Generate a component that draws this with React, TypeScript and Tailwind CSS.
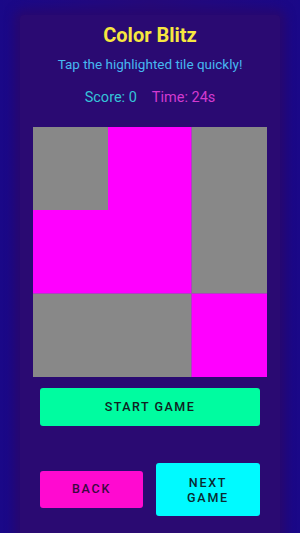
import React from "react";

export default function App() {
  const font = { fontFamily: "Roboto, 'Noto Sans', sans-serif" };
  return (
    <div
      className="w-[300px] h-[533px] overflow-hidden bg-gradient-to-r from-[#1a0888] via-[#25097a] to-[#1a0888] flex justify-center pt-[15px]"
      style={font}
    >
      <div className="w-[260px] h-[540px] bg-[#2a0a72] rounded-sm shadow-[0_0_10px_6px_rgba(40,8,110,0.9)] flex flex-col items-center">
        <h1 className="mt-[9px] text-[20px] leading-[22px] font-bold text-[#f7e740]">Color Blitz</h1>
        <p className="mt-[10px] text-[13.5px] leading-[17px] text-[#46b8f0]">Tap the highlighted tile quickly!</p>
        <div className="mt-[16px] flex gap-[15px] text-[14.5px] leading-[18px]">
          <span className="text-[#35c3d8]">Score: 0</span>
          <span className="text-[#d23ad0]">Time: 24s</span>
        </div>
        <div className="mt-[20px] grid grid-cols-[75px_83px_76px] grid-rows-[83px_83px_84px] w-[234px] h-[250px]">
          <div className="bg-[#888888]" />
          <div className="bg-[#ff00ff] row-span-2" />
          <div className="bg-[#888888] row-span-2 border-l border-[#b040c0]" />
          <div className="bg-[#ff00ff]" />
          <div className="bg-[#888888] col-span-2 border-t border-[#b040c0]" />
          <div className="bg-[#ff00ff] border-t border-l border-[#b040c0]" />
        </div>
        <button className="mt-[11px] w-[220px] h-[38px] rounded-[3px] bg-[#00fca0] text-[#102020] text-[12.5px] tracking-[0.12em] font-medium">
          START GAME
        </button>
        <div className="mt-[37px] w-[220px] flex justify-between items-center">
          <button className="w-[103px] h-[37px] rounded-[3px] bg-[#ff0ad0] text-[#3a0840] text-[12.5px] tracking-[0.14em] font-medium">
            BACK
          </button>
          <button className="w-[104px] h-[53px] rounded-[3px] bg-[#00faff] text-[#0a2a30] text-[12.5px] leading-[15px] tracking-[0.14em] font-medium">
            NEXT
            <br />
            GAME
          </button>
        </div>
      </div>
    </div>
  );
}
